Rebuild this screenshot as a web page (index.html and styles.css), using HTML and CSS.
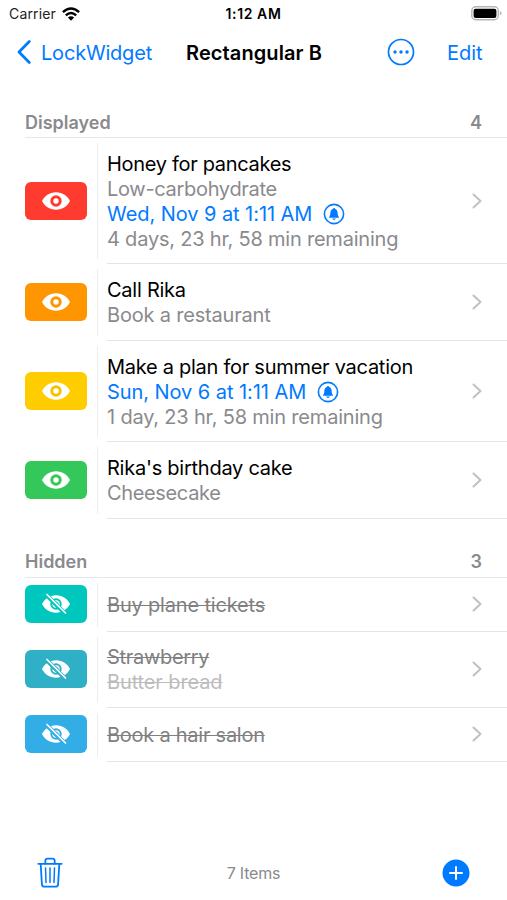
FILE: index.html
```html
<!DOCTYPE html>
<html lang="en">
<head>
<meta charset="utf-8">
<title>LockWidget</title>
<link rel="stylesheet" href="styles.css">
</head>
<body>
<svg class="defs" aria-hidden="true">
  <symbol id="eye" viewBox="0 0 30 22">
    <path fill="#fff" d="M1 11C3.500 6 8.500 2.300 15 2.300S26.500 6 29 11C26.500 16 21.500 19.700 15 19.700S3.500 16 1 11Z"/>
    <circle cx="15" cy="11" r="4.200" fill="none" stroke="currentColor" stroke-width="3"/>
  </symbol>
  <symbol id="eye-off" viewBox="0 0 30 22">
    <path fill="#fff" d="M1 11C3.500 6 8.500 2.300 15 2.300S26.500 6 29 11C26.500 16 21.500 19.700 15 19.700S3.500 16 1 11Z"/>
    <circle cx="15" cy="11" r="4.700" fill="none" stroke="currentColor" stroke-width="2"/>
    <circle cx="15" cy="11" r="2" fill="none" stroke="currentColor" stroke-width="1"/>
    <path d="M5 1.500L23.800 20.300" stroke="currentColor" stroke-width="4.400"/>
    <path d="M6 1.500L24.500 20" stroke="#fff" stroke-width="1.700" stroke-linecap="round"/>
  </symbol>
  <symbol id="chevron" viewBox="0 0 10 16">
    <path d="M1.500 1.500L8.500 8L1.500 14.500" fill="none" stroke="#c1c1c3" stroke-width="2" stroke-linecap="round" stroke-linejoin="round"/>
  </symbol>
  <symbol id="bell" viewBox="0 0 22 22">
    <circle cx="11" cy="11" r="9.600" fill="none" stroke="currentColor" stroke-width="1.600"/>
    <path fill="currentColor" d="M6 14.800C6 13.500 7.200 13.300 7.300 10.500C7.400 7.700 8.200 6.400 9.800 5.900C10 4.700 12 4.700 12.200 5.900C13.800 6.400 14.600 7.700 14.700 10.500C14.800 13.300 16 13.500 16 14.800ZM9.200 15.600H12.800C12.500 17.500 9.500 17.500 9.200 15.600Z"/>
  </symbol>
</svg>

<header class="status">
  <span class="carrier">Carrier</span>
  <svg class="wifi" viewBox="0 0 18 14"><g fill="none" stroke="#000" stroke-width="2.400"><path d="M.9 5.200Q9-2.200 17.100 5.200"/><path d="M3.800 8.300Q9 3.700 14.200 8.300"/></g><path d="M5.900 10.400Q9 7.900 12.100 10.400L9 13.700Z"/></svg>
  <span class="clock">1:12 AM</span>
  <svg class="battery" viewBox="0 0 31 15"><rect x=".8" y=".8" width="26.500" height="13" rx="4" fill="#fff" stroke="#b5b5b5" stroke-width="1.400"/><rect x="2.600" y="2.700" width="22.800" height="9.200" rx="2"/><path d="M28.900 5v4.600Q30.500 8.800 30.500 7.300T28.900 5" fill="#b5b5b5"/></svg>
</header>

<nav class="nav">
  <svg class="back" viewBox="0 0 14 24"><path d="M12.300 1.500L2 12L12.300 22.500" fill="none" stroke="currentColor" stroke-width="2.700" stroke-linecap="round" stroke-linejoin="round"/></svg>
  <span class="back-label">LockWidget</span>
  <h1 class="title">Rectangular B</h1>
  <svg class="more" viewBox="0 0 28 28"><circle cx="14" cy="14" r="12.500" fill="none" stroke="currentColor" stroke-width="1.700"/><g fill="currentColor"><circle cx="8" cy="14" r="1.700"/><circle cx="14" cy="14" r="1.700"/><circle cx="20" cy="14" r="1.700"/></g></svg>
  <span class="edit">Edit</span>
</nav>

<main>
  <section class="group">
    <h2 class="head"><span>Displayed</span><span class="count">4</span></h2>
    <div class="row four">
      <div class="swatch red"><svg><use href="#eye"/></svg></div><i class="rule"></i>
      <div class="body"><p class="name t1">Honey for pancakes</p><p class="note t2">Low-carbohydrate</p><p class="date"><span>Wed, Nov 9 at 1:11 AM</span><svg><use href="#bell"/></svg></p><p class="note t4">4 days, 23 hr, 58 min remaining</p></div>
      <svg class="chevron"><use href="#chevron"/></svg>
    </div>
    <div class="row two">
      <div class="swatch orange"><svg><use href="#eye"/></svg></div><i class="rule"></i>
      <div class="body"><p class="name t5">Call Rika</p><p class="note t6">Book a restaurant</p></div>
      <svg class="chevron"><use href="#chevron"/></svg>
    </div>
    <div class="row three">
      <div class="swatch yellow"><svg><use href="#eye"/></svg></div><i class="rule"></i>
      <div class="body"><p class="name t7">Make a plan for summer vacation</p><p class="date"><span>Sun, Nov 6 at 1:11 AM</span><svg><use href="#bell"/></svg></p><p class="note t9">1 day, 23 hr, 58 min remaining</p></div>
      <svg class="chevron"><use href="#chevron"/></svg>
    </div>
    <div class="row two">
      <div class="swatch green"><svg><use href="#eye"/></svg></div><i class="rule"></i>
      <div class="body"><p class="name t10">Rika's birthday cake</p><p class="note t11">Cheesecake</p></div>
      <svg class="chevron"><use href="#chevron"/></svg>
    </div>
  </section>

  <section class="group hidden-group">
    <h2 class="head"><span>Hidden</span><span class="count">3</span></h2>
    <div class="row one">
      <div class="swatch mint"><svg><use href="#eye-off"/></svg></div><i class="rule"></i>
      <div class="body"><p class="name t12">Buy plane tickets</p></div>
      <svg class="chevron"><use href="#chevron"/></svg>
    </div>
    <div class="row two short">
      <div class="swatch teal"><svg><use href="#eye-off"/></svg></div><i class="rule"></i>
      <div class="body"><p class="name t13">Strawberry</p><p class="note t14">Butter bread</p></div>
      <svg class="chevron"><use href="#chevron"/></svg>
    </div>
    <div class="row one">
      <div class="swatch cyan"><svg><use href="#eye-off"/></svg></div><i class="rule"></i>
      <div class="body"><p class="name t15">Book a hair salon</p></div>
      <svg class="chevron"><use href="#chevron"/></svg>
    </div>
  </section>
</main>

<footer class="toolbar">
  <svg class="trash" viewBox="0 0 26 32"><g fill="none" stroke="currentColor" stroke-width="1.800" stroke-linecap="round" stroke-linejoin="round"><path d="M1.300 6.800H24.700"/><path d="M8.300 6.500V4Q8.300 1.700 10.600 1.700H15.400Q17.700 1.700 17.700 4V6.500"/><path d="M3.700 7L4.900 27.200Q5 29.700 7.500 29.700H18.500Q21 29.700 21.100 27.200L22.300 7"/><path d="M8.500 11L9 25.500M13 11V25.500M17.500 11L17 25.500" stroke-width="1.500"/></g></svg>
  <span class="total">7 Items</span>
  <svg class="add" viewBox="0 0 28 28"><circle cx="14" cy="14" r="13.500" fill="currentColor"/><path d="M14 8V20M8 14H20" stroke="#fff" stroke-width="2" stroke-linecap="round"/></svg>
</footer>
</body>
</html>
```
FILE: styles.css
```css
* { box-sizing: border-box; margin: 0; padding: 0; }
body { width: 507px; height: 900px; background: #fff; color: #000; font-family: Inter, "Liberation Sans", sans-serif; font-size: 20px; line-height: 25px; display: flex; flex-direction: column; overflow: hidden; }
.defs { position: absolute; width: 0; height: 0; }
svg { display: block; flex: none; }

.status { height: 27px; display: grid; grid-template-columns: 53px 1fr auto 1fr 30px; align-items: center; padding: 0 6px 0 9px; font-size: 14px; line-height: 27px; }
.carrier { color: #222; white-space: nowrap; letter-spacing: .15px; }
.wifi { width: 18px; height: 14px; }
.clock { font-weight: 600; letter-spacing: .6px; grid-column: 3; margin-left: -26px; }
.battery { grid-column: 5; width: 31px; height: 15px; }

.nav { height: 50px; display: flex; align-items: center; padding-left: 17px; color: #007aff; white-space: nowrap; }
.back { width: 14px; height: 24px; margin-right: 10px; }
.back-label { width: 145px; letter-spacing: -.2px; padding-top: 2px; }
.title { width: 201px; font-size: 20px; font-weight: 600; color: #000; letter-spacing: .1px; padding-top: 2px; }
.edit { padding-top: 2px; }
.more { width: 28px; height: 28px; margin-right: 32px; }

.head { height: 61px; margin-left: 25px; padding: 33px 25px 0 0; border-bottom: 1px solid #e8e8e8; display: flex; justify-content: space-between; font-size: 18px; font-weight: 600; line-height: 25px; color: #8a8a8e; }
.hidden-group .head { height: 59px; padding-top: 30px; }
.row { display: flex; align-items: center; padding-left: 25px; }
.four { height: 126px; }
.three { height: 101px; }
.two { height: 77px; }
.short { height: 76px; }
.one { height: 54px; }
.swatch { width: 62px; height: 38px; margin-bottom: 1px; border-radius: 6px; display: flex; align-items: center; justify-content: center; flex: none; }
.hidden-group .swatch, .hidden-group .chevron { margin-bottom: 2px; }
.swatch svg { width: 30px; height: 22px; }
.rule { width: 1px; align-self: stretch; margin: 5px 9px 5px 10px; background: #ededed; flex: none; }
.body { flex: 1; align-self: stretch; display: flex; flex-direction: column; justify-content: center; padding-top: 2px; border-bottom: 1px solid #e4e4e5; white-space: nowrap; }
.short .body { padding-top: 0; }
.chevron { width: 10px; height: 16px; margin: 0 25px 1px -35px; }
.note { color: #8a8a8e; }
.date { color: #007aff; display: flex; align-items: center; gap: 11px; letter-spacing: -.06px; }
.date svg { width: 22px; height: 22px; margin-bottom: 1px; }
.hidden-group p { text-decoration: line-through; text-decoration-thickness: 1px; }
.hidden-group .name { color: #808080; }
.hidden-group .note { color: #bcbcbe; }

.t1, .t2, .t13 { letter-spacing: -.31px; }
.t4 { letter-spacing: -.21px; }
.t5, .t10, .t15 { letter-spacing: -.25px; }
.t6, .t9 { letter-spacing: -.19px; }
.t7 { letter-spacing: -.27px; }
.t11 { letter-spacing: -.35px; }
.t12 { letter-spacing: -.18px; }
.t14 { letter-spacing: -.12px; }

.red { background: #ff3b30; color: #ff3b30; }
.orange { background: #ff9500; color: #ff9500; }
.yellow { background: #ffcc00; color: #f5c400; }
.green { background: #34c759; color: #34c759; }
.mint { background: #00c7be; color: #00c7be; }
.teal { background: #30b0c7; color: #30b0c7; }
.cyan { background: #32ade6; color: #32ade6; }

.toolbar { margin-top: auto; height: 54px; display: flex; align-items: center; justify-content: space-between; padding: 0 37px; color: #007aff; }
.trash { width: 26px; height: 32px; }
.total { font-size: 16px; letter-spacing: -.2px; padding-left: 2px; padding-top: 1px; color: #8a8a8e; }
.add { width: 28px; height: 28px; }
```
